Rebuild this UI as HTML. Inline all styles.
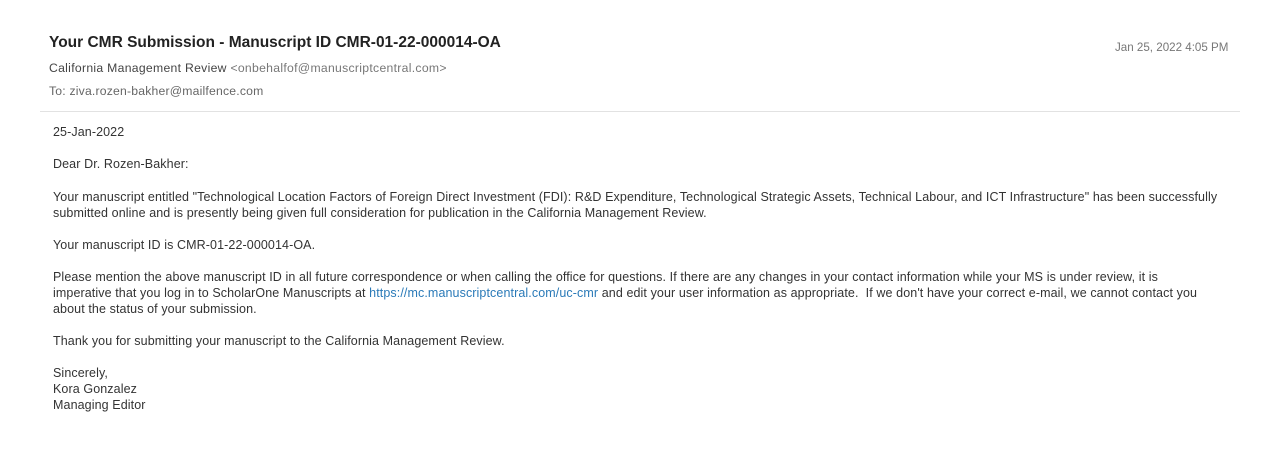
<!DOCTYPE html>
<html><head><meta charset="utf-8"><style>
body{margin:0;background:#fff;width:1261px;height:464px;overflow:hidden;font-family:"Liberation Sans",sans-serif;color:#333;position:relative}
.a{position:absolute;white-space:nowrap}
.t{left:49px;top:34px;font-size:15.5px;font-weight:bold;color:#222;letter-spacing:0px}
.f{left:49px;top:61px;font-size:12.2px;color:#444;letter-spacing:0.3px}
.f span{color:#777}
.to{left:49px;top:84px;font-size:12.2px;color:#666;letter-spacing:0.2px}
.d{left:1115px;top:41px;font-size:11.6px;color:#777}
.hr{position:absolute;left:40px;top:111px;width:1200px;height:1px;background:#e2e2e2}
.b{font-size:12.5px;line-height:16px;left:53px;color:#333;letter-spacing:0.1px}
a{color:#2a7ab8;text-decoration:none}
</style></head><body>
<div class="a t">Your CMR Submission - Manuscript ID CMR-01-22-000014-OA</div>
<div class="a f">California Management Review <span>&lt;onbehalfof@manuscriptcentral.com&gt;</span></div>
<div class="a to">To: ziva.rozen-bakher@mailfence.com</div>
<div class="a d">Jan 25, 2022 4:05 PM</div>
<div class="hr"></div>
<div class="a b" style="top:124px">25-Jan-2022</div>
<div class="a b" style="top:156px">Dear Dr. Rozen-Bakher:</div>
<div class="a b" style="top:189px">Your manuscript entitled "Technological Location Factors of Foreign Direct Investment (FDI): R&amp;D Expenditure, Technological Strategic Assets, Technical Labour, and ICT Infrastructure" has been successfully<br>submitted online and is presently being given full consideration for publication in the California Management Review.</div>
<div class="a b" style="top:237px">Your manuscript ID is CMR-01-22-000014-OA.</div>
<div class="a b" style="top:269px">Please mention the above manuscript ID in all future correspondence or when calling the office for questions. If there are any changes in your contact information while your MS is under review, it is<br>imperative that you log in to ScholarOne Manuscripts at <a>https://mc.manuscriptcentral.com/uc-cmr</a> and edit your user information as appropriate.&nbsp; If we don't have your correct e-mail, we cannot contact you<br>about the status of your submission.</div>
<div class="a b" style="top:333px">Thank you for submitting your manuscript to the California Management Review.</div>
<div class="a b" style="top:365px">Sincerely,<br>Kora Gonzalez<br>Managing Editor</div>
</body></html>
